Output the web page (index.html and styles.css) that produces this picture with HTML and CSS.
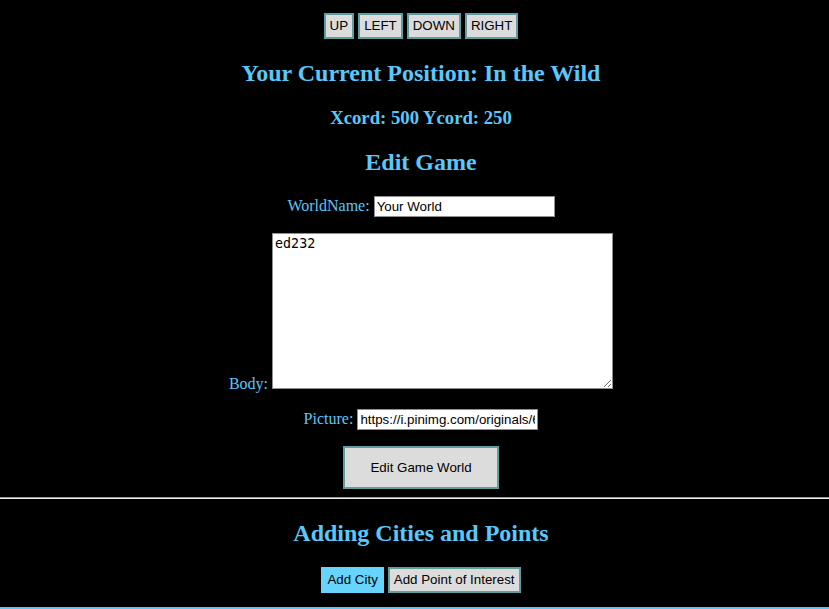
FILE: index.html
```html
<!DOCTYPE html>
<html>
<head>
<meta charset="utf-8">
<link rel="stylesheet" href="styles.css">
</head>
<body>
<div class="section">
  <div class="nav">
    <button class="btn">UP</button>
    <button class="btn">LEFT</button>
    <button class="btn">DOWN</button>
    <button class="btn">RIGHT</button>
  </div>
  <h2 class="title">Your Current Position: In the Wild</h2>
  <h3 class="coords">Xcord: 500 Ycord: 250</h3>
  <h2 class="title">Edit Game</h2>
  <form class="form">
    <p class="row"><label>WorldName: </label><input class="text-in" type="text" value="Your World"></p>
    <p class="row"><label>Body: </label><textarea class="body-in">ed232</textarea></p>
    <p class="row"><label>Picture: </label><input class="text-in" type="text" value="https://i.pinimg.com/originals/6"></p>
    <p class="row"><button type="button" class="btn btn-big">Edit Game World</button></p>
  </form>
</div>
<hr class="divider">
<div class="section">
  <h2 class="title">Adding Cities and Points</h2>
  <div class="add-row">
    <button class="btn btn-active">Add City</button>
    <button class="btn">Add Point of Interest</button>
  </div>
</div>
<div class="bottom-line"></div>
</body>
</html>
```
FILE: styles.css
```css
html, body {
  background: #000;
}
body {
  margin: 0;
  font-family: "Liberation Serif", "Times New Roman", serif;
  color: #5ac8fa;
  overflow: hidden;
}
.section {
  text-align: center;
  padding-left: 13px;
}
.nav {
  padding-top: 13px;
  font-size: 0;
}
.nav .btn {
  margin: 0 2px;
}
.btn {
  font-family: "Liberation Sans", Arial, sans-serif;
  font-size: 13.33px;
  color: #000;
  background: #dcdcdc;
  border: 2px solid #5f9ea0;
  padding: 4px 4px;
  line-height: 14px;
  cursor: pointer;
  vertical-align: middle;
}
.btn-active {
  background: #66d4fc;
  border-color: #66d4fc;
}
.title {
  font-size: 24px;
  font-weight: bold;
  margin: 20px 0;
  line-height: 28px;
}
.coords {
  font-size: 18.72px;
  font-weight: bold;
  margin: 19px 0;
  line-height: 22px;
}
.coords + .title {
  margin-top: 19px;
}
.form {
  margin: 0;
}
.row {
  margin: 16px 0;
  font-size: 16px;
}
.row:first-child {
  margin-top: 19px;
}
.row:last-child {
  margin-bottom: 0;
}
.text-in {
  font-family: "Liberation Sans", Arial, sans-serif;
  font-size: 13.33px;
  width: 181px;
  height: 21px;
  box-sizing: border-box;
  border: 1px solid #8f8f8f;
  padding: 1px 2px;
  background: #fff;
  color: #000;
}
.body-in {
  font-family: "DejaVu Sans Mono", monospace;
  font-size: 13.33px;
  width: 341px;
  height: 156px;
  box-sizing: border-box;
  border: 1px solid #8f8f8f;
  padding: 2px;
  background: #fff;
  color: #000;
}
.btn-big {
  padding: 12px 25px;
  line-height: 15px;
}
.divider {
  margin: 8px 0;
  border: 0;
  border-top: 1px solid #9a9a9a;
  border-bottom: 1px solid #eee;
  height: 0;
}
.add-row {
  font-size: 0;
  margin-top: 20px;
}
.add-row .btn {
  margin: 0 2px;
}
.bottom-line {
  margin-top: 14px;
  border-top: 2px solid #5ac8fa;
}
```
